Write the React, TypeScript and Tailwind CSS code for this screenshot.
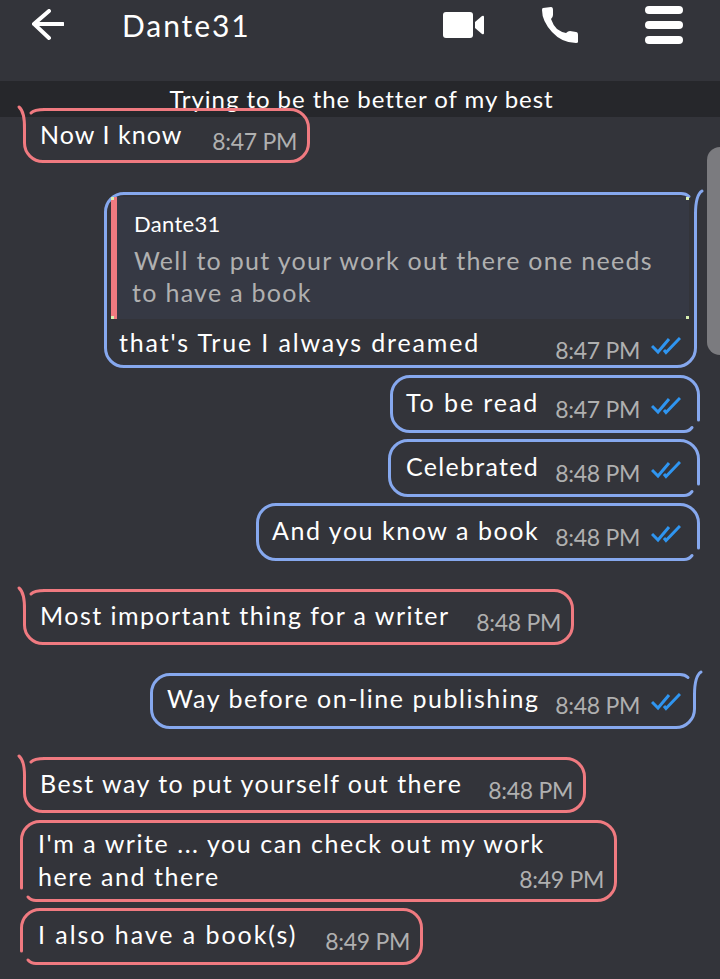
import React, { FC } from "react";

type TailKind = "tl" | "tr" | "bl" | "br";

// tails sit on the border box, so they are pulled out by the 3px border
const Tail: FC<{ kind: TailKind; stroke: string; band?: boolean }> = ({ kind, stroke, band }) => {
  const pos = {
    tl: "-left-[3px] -top-[3px]",
    tr: "-right-[3px] -top-[3px]",
    bl: "-left-[3px] -bottom-[3px]",
    br: "-right-[3px] -bottom-[3px]",
  }[kind];
  const paths = {
    tl: ["M-4 -1 Q2 4 1.5 22", "M8 5 Q11 1.5 22 1.5"],
    tr: ["M25 -1 Q18.5 3 18.5 22", "M-2 1.5 L4 1.5 Q9 1.5 12 4.5"],
    bl: ["M1.5 -2 L1.5 6", "M8 15 Q11 18.5 16 18.5 L22 18.5"],
    br: ["M18.5 -2 L18.5 7", "M-2 18.5 L4 18.5 Q9 18.5 12 14.5"],
  }[kind];
  return (
    <svg className={`absolute ${pos} w-[20px] h-[20px] overflow-visible`} viewBox="0 0 20 20">
      <rect x="0" y="0" width="20" height="20" fill="#33343a" />
      {band && <rect x="0" y="0" width="20" height="9" fill="#26272b" />}
      {paths.map((d) => (
        <path key={d} d={d} fill="none" stroke={stroke} strokeWidth="3" strokeLinecap="round" />
      ))}
    </svg>
  );
};

const Checks: FC = () => (
  <svg className="w-[30px] h-[18px] shrink-0" viewBox="0 0 30 18">
    <path
      d="M1 9 L7 15 L18 2 M13 13 L15 15.5 L29 1"
      fill="none"
      stroke="#2f95f0"
      strokeWidth="3"
      strokeLinejoin="miter"
    />
  </svg>
);

const Time: FC<{ text: string; className?: string }> = ({ text, className = "" }) => (
  <span className={`text-[23px] leading-[28px] tracking-[-0.3px] text-[#b0b0b0] whitespace-nowrap ${className}`}>
    {text}
  </span>
);

type MsgProps = {
  text: string;
  time: string;
  tail: TailKind;
  box: string;
  track?: string;
  band?: boolean;
};

const Incoming: FC<MsgProps> = ({ text, time, tail, box, band, track = "tracking-[1.45px]" }) => (
  <div className={`relative border-[3px] border-[#f07a80] rounded-[20px] ${box}`}>
    <Tail kind={tail} stroke="#f07a80" band={band} />
    <div className="relative flex pr-[10px]">
      <span className={`pt-[7px] text-[25px] leading-[32px] text-white whitespace-nowrap ${track}`}>{text}</span>
      <Time text={time} className="ml-auto pt-[16px]" />
    </div>
  </div>
);

const Outgoing: FC<MsgProps> = ({ text, time, tail, box, track = "tracking-[1.55px]" }) => (
  <div className={`relative ml-auto border-[3px] border-[#86a8ee] rounded-[20px] ${box}`}>
    <Tail kind={tail} stroke="#86a8ee" />
    <div className={`relative flex items-start ${tail === "tr" ? "-mt-[2px]" : ""}`}>
      <span className={`pt-[8px] text-[25px] leading-[32px] text-white whitespace-nowrap ${track}`}>{text}</span>
      <Time text={time} className="ml-auto pt-[17px]" />
      <div className="ml-[11px] pt-[19px]">
        <Checks />
      </div>
    </div>
  </div>
);

const Dot: FC<{ pos: string }> = ({ pos }) => <div className={`absolute w-[3px] h-[3px] bg-[#d8f0b0] ${pos}`} />;

const QuoteMessage: FC = () => (
  <div className="relative mt-[29px] ml-auto mr-[23px] w-[593px] h-[176px] border-[3px] border-[#86a8ee] rounded-[20px]">
    <Tail kind="tr" stroke="#86a8ee" />
    <div className="relative mt-[2px] ml-[4px] mr-[5px] h-[122px] bg-[#363944] border-l-[6px] border-[#f07a80] pl-[17px] pr-[10px]">
      <Dot pos="-left-[6px] top-0" />
      <Dot pos="-left-[6px] bottom-0" />
      <Dot pos="right-0 top-0" />
      <Dot pos="right-0 bottom-0" />
      <div className="pt-[13px] text-[22px] leading-[28px] tracking-[0.3px] text-white">Dante31</div>
      <div className="mt-[6px] text-[25px] leading-[32px] tracking-[1.3px] text-[#b0b0b0]">
        Well to put your work out there one needs
        <br />
        <span className="-ml-[2px]">to have a book</span>
      </div>
    </div>
    <div className="relative flex items-start pl-[12px] pr-[13px]">
      <span className="pt-[7px] text-[25px] leading-[32px] tracking-[1.85px] text-white whitespace-nowrap">
        that's True I always dreamed
      </span>
      <Time text="8:47 PM" className="ml-auto pt-[17px]" />
      <div className="ml-[11px] pt-[18px]">
        <Checks />
      </div>
    </div>
  </div>
);

const App: FC = () => {
  return (
    <div className="relative w-[720px] h-[979px] overflow-hidden bg-[#33343a] [font-family:Lato,sans-serif]">
      <header className="flex items-start h-[81px]">
        <svg className="mt-[9px] ml-[32px] w-[32px] h-[32px]" viewBox="0 0 32 32">
          <path d="M31 15 H2 M17 2 L2 15 L17 29" fill="none" stroke="white" strokeWidth="4" strokeLinecap="round" />
        </svg>
        <h1 className="mt-[6px] ml-[58px] w-[321px] text-[30px] leading-[38px] tracking-[1.9px] text-white">Dante31</h1>
        <svg className="mt-[12px] w-[42px] h-[26px]" viewBox="0 0 42 26">
          <rect x="0" y="0" width="30" height="26" rx="3" fill="white" />
          <path d="M32 10 L39 4 Q41 3 41 5 L41 21 Q41 23 39 22 L32 16 Z" fill="white" />
        </svg>
        <svg className="mt-[7px] ml-[57px] w-[36px] h-[36px]" viewBox="0 0 36 36">
          <path
            d="M1 1 L9 0 Q11 0 11 3 L11 8 Q11 10 9 12 Q11 18 15 22 Q19 25 24 26 Q26 24 28 24 L34 25 Q36 25 36 28 L36 35 Q36 36 34 36 Q20 36 10 25 Q0 14 0 3 Q0 1 1 1 Z"
            fill="white"
          />
        </svg>
        <div className="mt-[6px] ml-[67px] flex flex-col gap-[7px] w-[38px]">
          <div className="h-[8px] rounded-full bg-white" />
          <div className="h-[8px] rounded-full bg-white" />
          <div className="h-[8px] rounded-full bg-white" />
        </div>
      </header>

      <div className="h-[36px] text-center text-[24px] leading-[36px] tracking-[0.95px] text-white pl-[3px] bg-[#26272b]">
        Trying to be the better of my best
      </div>

      <main className="relative flex flex-col -mt-[9px]">
        <Incoming band text="Now I know" time="8:47 PM" tail="tl" track="tracking-[1.05px]" box="ml-[23px] w-[287px] h-[55px] pl-[14px]" />
        <QuoteMessage />
        <Outgoing text="To be read" time="8:47 PM" tail="br" track="tracking-[1.9px]" box="mt-[7px] mr-[20px] w-[310px] h-[58px] pl-[13px] pr-[16px]" />
        <Outgoing text="Celebrated" time="8:48 PM" tail="br" track="tracking-[1.3px]" box="mt-[6px] mr-[20px] w-[312px] h-[58px] pl-[15px] pr-[16px]" />
        <Outgoing text="And you know a book" time="8:48 PM" tail="br" box="mt-[6px] mr-[20px] w-[444px] h-[58px] pl-[13px] pr-[16px]" />
        <Incoming text="Most important thing for a writer" time="8:48 PM" tail="tl" box="mt-[28px] ml-[23px] w-[551px] h-[56px] pl-[14px]" />
        <Outgoing text="Way before on-line publishing" time="8:48 PM" tail="tr" box="mt-[28px] mr-[24px] w-[546px] h-[56px] pl-[14px] pr-[12px]" />
        <Incoming text="Best way to put yourself out there" time="8:48 PM" tail="tl" box="mt-[28px] ml-[23px] w-[563px] h-[56px] pl-[14px]" />

        <div className="relative mt-[7px] ml-[20px] w-[597px] h-[82px] border-[3px] border-[#f07a80] rounded-[20px] pl-[15px] pr-[10px]">
          <Tail kind="bl" stroke="#f07a80" />
          <div className="relative pt-[4px] text-[25px] leading-[33px] tracking-[1.55px] text-white whitespace-nowrap">
            I'm a write ... you can check out my work
          </div>
          <div className="relative flex items-end text-[25px] leading-[33px] tracking-[1.55px] text-white">
            <span>here and there</span>
            <Time text="8:49 PM" className="ml-auto" />
          </div>
        </div>

        <Incoming text="I also have a book(s)" time="8:49 PM" tail="bl" track="tracking-[1.95px]" box="mt-[6px] ml-[20px] w-[403px] h-[57px] pl-[15px]" />
      </main>

      {/* scroll handle */}
      <div className="absolute right-0 top-[147px] w-[13px] h-[208px] rounded-l-[14px] bg-[#7b7b7f]" />
    </div>
  );
};

export default App;
